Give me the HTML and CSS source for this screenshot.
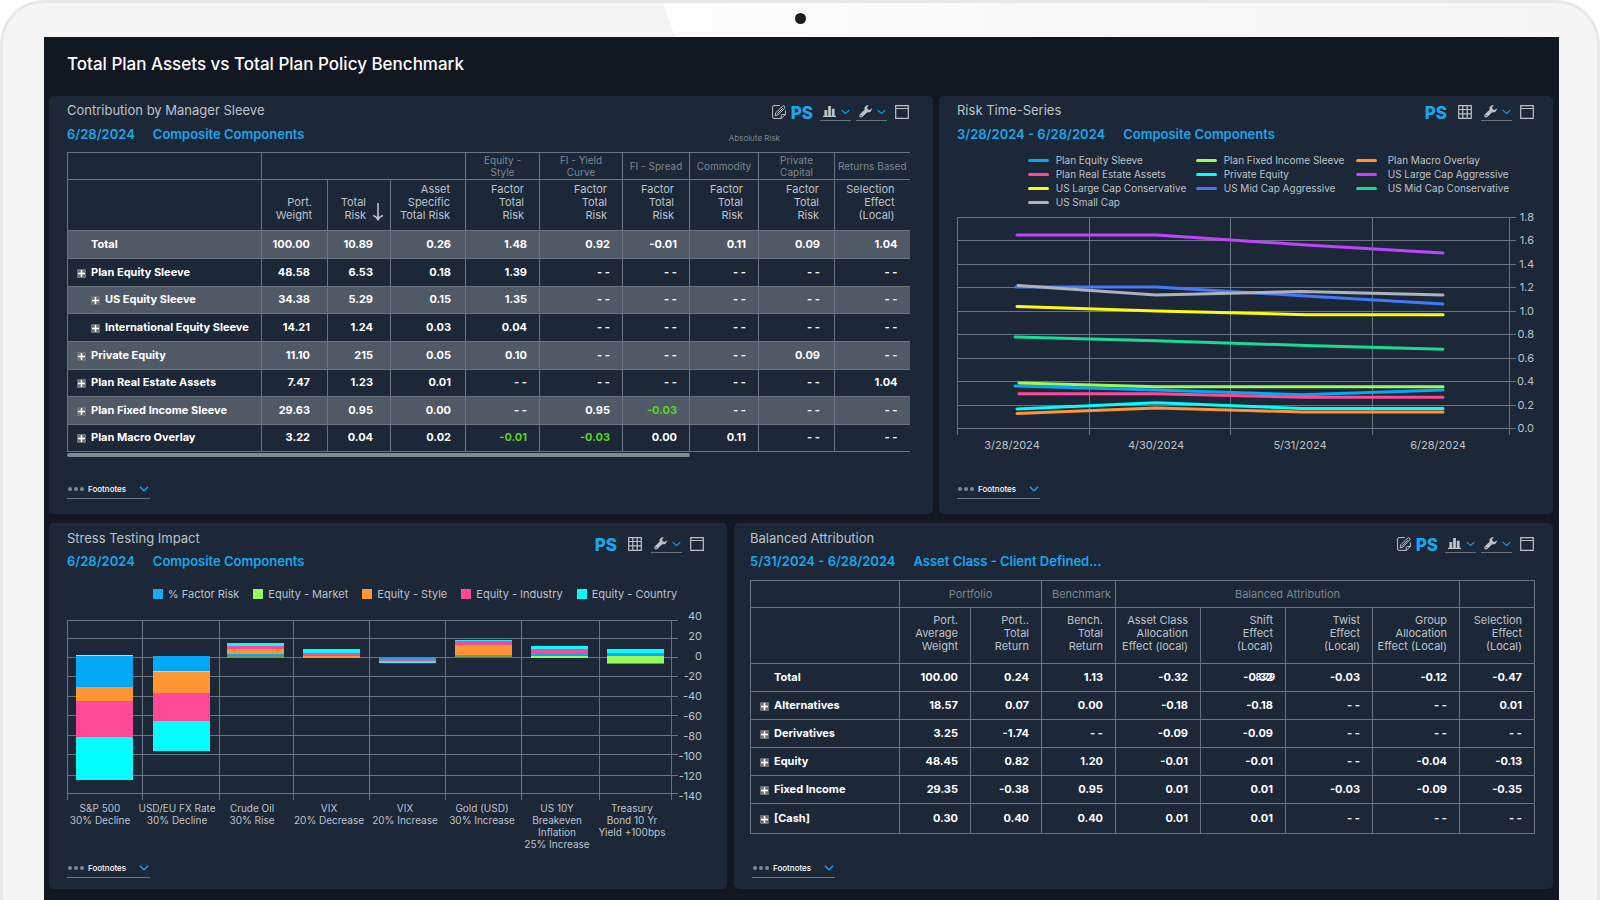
FILE: index.html
```html
<!DOCTYPE html>
<html lang="en">
<head>
<meta charset="utf-8">
<title>Total Plan Assets vs Total Plan Policy Benchmark</title>
<link rel="stylesheet" href="styles.css">
</head>
<body>
<svg class="symbols" aria-hidden="true">
  <symbol id="i-edit" viewBox="0 0 14 14"><path d="M8 .6H2Q.6.600.6 2V12Q.6 13.400 2 13.400H9.200L13.400 9.500V5.500M9.200 13.400V10.500Q9.200 9.500 10.200 9.500H13.400" /><path d="M3 10.800L3.800 7.800L10.600 1Q11.400.3 12.400 1.200Q13.400 2.200 12.700 3.100L5.900 10ZM5.200 8.800L11 3"/></symbol>
  <symbol id="i-bars" viewBox="0 0 14 14"><path class="solid" d="M1.500 5.500H4.500V11.500H5.500V1H8.500V11.500H9.500V4H12.500V11.500H14V13H0V11.500H1.500Z"/></symbol>
  <symbol id="i-wrench" viewBox="0 0 14 14"><path class="solid" d="M13.600 3.400L11.500 5.400L9.300 4.700L8.700 2.500L10.600.400Q8.500-.2 6.900 1.300Q5.500 2.900 6.100 4.900L.8 10.300Q-.2 11.600.8 12.900Q2.200 14.100 3.500 13L8.900 7.700Q11 8.300 12.600 6.900Q14.100 5.300 13.600 3.400ZM2.100 12.200A.7.7 0 1 1 2.100 10.800A.7.7 0 1 1 2.100 12.200Z" fill-rule="evenodd"/></symbol>
  <symbol id="i-window" viewBox="0 0 14 14"><path d="M.7.700H13.300V13.300H.7ZM.7 3.500H13.300"/></symbol>
  <symbol id="i-grid" viewBox="0 0 14 14"><path d="M.7.700H13.300V13.300H.7ZM.7 4.500H13.300M.7 8.800H13.300M4.800.7V13.300M9.200.7V13.300"/></symbol>
  <symbol id="i-chevron" viewBox="0 0 10 6"><path d="M.8.800L5 4.800L9.200.8"/></symbol>
  <symbol id="i-plus" viewBox="0 0 9 9"><rect class="tile" width="9" height="9" rx="1"/><path d="M4.500 1V8M1 4.500H8"/></symbol>
  <symbol id="i-dots" viewBox="0 0 16 4"><circle cx="2" cy="2" r="2"/><circle cx="8" cy="2" r="2"/><circle cx="14" cy="2" r="2"/></symbol>
</svg>
<div class="device">
  <div class="glare"></div>
  <div class="camera"></div>
  <main class="screen">
    <h1>Total Plan Assets vs Total Plan Policy Benchmark</h1>

    <div class="row row-top">
      <section class="panel">
        <header class="panel-head">
          <div>
            <h2>Contribution by Manager Sleeve</h2>
            <p class="sub"><span>6/28/2024</span><span>Composite Components</span></p>
          </div>
          <div class="tools">
            <button aria-label="Edit"><svg class="ic thin"><use href="#i-edit"/></svg></button>
            <button class="ps">PS</button>
            <button class="drop" aria-label="Chart type"><svg class="ic"><use href="#i-bars"/></svg><svg class="chev"><use href="#i-chevron"/></svg></button>
            <button class="drop" aria-label="Settings"><svg class="ic"><use href="#i-wrench"/></svg><svg class="chev"><use href="#i-chevron"/></svg></button>
            <button class="win" aria-label="Maximize"><svg class="ic"><use href="#i-window"/></svg></button>
          </div>
        </header>
        <p class="caption">Absolute Risk</p>
        <table class="contrib">
          <colgroup><col class="w194"><col class="w66"><col class="w63"><col class="w75"><col class="w74"><col class="w83"><col class="w67"><col class="w69"><col class="w76"><col class="w75"></colgroup>
          <thead>
            <tr class="groups"><th></th><th colspan="3"></th><th>Equity -<br>Style</th><th>FI - Yield<br>Curve</th><th>FI - Spread</th><th>Commodity</th><th>Private<br>Capital</th><th>Returns Based</th></tr>
            <tr class="heads"><th></th><th>Port.<br>Weight</th><th class="sorted"><span>Total<br>Risk</span><svg class="sort" viewBox="0 0 12 20"><path d="M6 1V18M1 13.500Q5.500 15 6 18.500Q6.500 15 11 13.500"/></svg></th><th>Asset<br>Specific<br>Total Risk</th><th>Factor<br>Total<br>Risk</th><th>Factor<br>Total<br>Risk</th><th>Factor<br>Total<br>Risk</th><th>Factor<br>Total<br>Risk</th><th>Factor<br>Total<br>Risk</th><th>Selection<br>Effect<br>(Local)</th></tr>
          </thead>
          <tbody>
            <tr><th class="plain">Total</th><td>100.00</td><td>10.89</td><td>0.26</td><td>1.48</td><td>0.92</td><td>-0.01</td><td>0.11</td><td>0.09</td><td>1.04</td></tr>
            <tr><th><button aria-label="Expand"><svg class="plus"><use href="#i-plus"/></svg></button>Plan Equity Sleeve</th><td>48.58</td><td>6.53</td><td>0.18</td><td>1.39</td><td>- -</td><td>- -</td><td>- -</td><td>- -</td><td>- -</td></tr>
            <tr><th class="child"><button aria-label="Expand"><svg class="plus"><use href="#i-plus"/></svg></button>US Equity Sleeve</th><td>34.38</td><td>5.29</td><td>0.15</td><td>1.35</td><td>- -</td><td>- -</td><td>- -</td><td>- -</td><td>- -</td></tr>
            <tr><th class="child"><button aria-label="Expand"><svg class="plus"><use href="#i-plus"/></svg></button>International Equity Sleeve</th><td>14.21</td><td>1.24</td><td>0.03</td><td>0.04</td><td>- -</td><td>- -</td><td>- -</td><td>- -</td><td>- -</td></tr>
            <tr><th><button aria-label="Expand"><svg class="plus"><use href="#i-plus"/></svg></button>Private Equity</th><td>11.10</td><td>215</td><td>0.05</td><td>0.10</td><td>- -</td><td>- -</td><td>- -</td><td>0.09</td><td>- -</td></tr>
            <tr><th><button aria-label="Expand"><svg class="plus"><use href="#i-plus"/></svg></button>Plan Real Estate Assets</th><td>7.47</td><td>1.23</td><td>0.01</td><td>- -</td><td>- -</td><td>- -</td><td>- -</td><td>- -</td><td>1.04</td></tr>
            <tr><th><button aria-label="Expand"><svg class="plus"><use href="#i-plus"/></svg></button>Plan Fixed Income Sleeve</th><td>29.63</td><td>0.95</td><td>0.00</td><td>- -</td><td>0.95</td><td class="green">-0.03</td><td>- -</td><td>- -</td><td>- -</td></tr>
            <tr><th><button aria-label="Expand"><svg class="plus"><use href="#i-plus"/></svg></button>Plan Macro Overlay</th><td>3.22</td><td>0.04</td><td>0.02</td><td class="green">-0.01</td><td class="green">-0.03</td><td>0.00</td><td>0.11</td><td>- -</td><td>- -</td></tr>
          </tbody>
        </table>
        <div class="scroll"></div>
        <button class="foot"><svg class="dots"><use href="#i-dots"/></svg>Footnotes<svg class="chev"><use href="#i-chevron"/></svg></button>
      </section>

      <section class="panel right">
        <header class="panel-head">
          <div>
            <h2>Risk Time-Series</h2>
            <p class="sub"><span>3/28/2024 - 6/28/2024</span><span>Composite Components</span></p>
          </div>
          <div class="tools wide">
            <button class="ps">PS</button>
            <button aria-label="Table"><svg class="ic"><use href="#i-grid"/></svg></button>
            <button class="drop" aria-label="Settings"><svg class="ic"><use href="#i-wrench"/></svg><svg class="chev"><use href="#i-chevron"/></svg></button>
            <button class="win" aria-label="Maximize"><svg class="ic"><use href="#i-window"/></svg></button>
          </div>
        </header>
        <ul class="line-legend">
          <li><i class="k-blue"></i>Plan Equity Sleeve</li><li><i class="k-lime"></i>Plan Fixed Income Sleeve</li><li><i class="k-orange"></i>Plan Macro Overlay</li>
          <li><i class="k-pink"></i>Plan Real Estate Assets</li><li><i class="k-cyan"></i>Private Equity</li><li><i class="k-purple"></i>US Large Cap Aggressive</li>
          <li><i class="k-yellow"></i>US Large Cap Conservative</li><li><i class="k-royal"></i>US Mid Cap Aggressive</li><li><i class="k-green"></i>US Mid Cap Conservative</li>
          <li><i class="k-grey"></i>US Small Cap</li>
        </ul>
        <svg class="chart" viewBox="957 209 577 246" role="img" aria-label="Risk time-series chart">
          <path class="gridline" d="M957 217.500H1516M957 240.500H1516M957 264.500H1516M957 287.500H1516M957 311.500H1516M957 334.500H1516M957 358.500H1516M957 381.500H1516M957 405.500H1516M957 428.500H1516M957.500 217V435M1089.500 217V435M1230.500 217V435M1372.500 217V435M1509.500 217V435"/>
          <g class="series">
            <path class="s-purple" d="M1017 235H1156L1306 245L1443 253"/>
            <path class="s-royal" d="M1016 287H1156L1306 296L1443 304"/>
            <path class="s-grey" d="M1018 285.500L1156 295L1302 291.500L1443 295"/>
            <path class="s-yellow" d="M1017 306.500L1156 311L1306 314.700H1443"/>
            <path class="s-green" d="M1015 337L1156 340.800L1306 345.500L1443 349.300"/>
            <path class="s-blue" d="M1015 386L1156 390L1302 394.700L1443 390"/>
            <path class="s-lime" d="M1019 383L1156 386.800H1443"/>
            <path class="s-pink" d="M1019 393.700H1156L1302 397.300H1443"/>
            <path class="s-orange" d="M1017 413.500L1156 408L1302 412H1443"/>
            <path class="s-cyan" d="M1017 409L1156 402.700L1302 408.500H1443"/>
          </g>
          <g class="t11 end">
            <text x="1534" y="221">1.8</text><text x="1534" y="244">1.6</text><text x="1534" y="268">1.4</text><text x="1534" y="291">1.2</text><text x="1534" y="315">1.0</text><text x="1534" y="338">0.8</text><text x="1534" y="362">0.6</text><text x="1534" y="385">0.4</text><text x="1534" y="409">0.2</text><text x="1534" y="432">0.0</text>
          </g>
          <g class="t11 mid"><text x="1012" y="449">3/28/2024</text><text x="1156" y="449">4/30/2024</text><text x="1300" y="449">5/31/2024</text><text x="1438" y="449">6/28/2024</text></g>
        </svg>
        <button class="foot"><svg class="dots"><use href="#i-dots"/></svg>Footnotes<svg class="chev"><use href="#i-chevron"/></svg></button>
      </section>
    </div>

    <div class="row row-bottom">
      <section class="panel stress">
        <header class="panel-head">
          <div>
            <h2>Stress Testing Impact</h2>
            <p class="sub"><span>6/28/2024</span><span>Composite Components</span></p>
          </div>
          <div class="tools wide">
            <button class="ps">PS</button>
            <button aria-label="Table"><svg class="ic"><use href="#i-grid"/></svg></button>
            <button class="drop" aria-label="Settings"><svg class="ic"><use href="#i-wrench"/></svg><svg class="chev"><use href="#i-chevron"/></svg></button>
            <button class="win" aria-label="Maximize"><svg class="ic"><use href="#i-window"/></svg></button>
          </div>
        </header>
        <ul class="bar-legend"><li><i class="k-sky"></i>% Factor Risk</li><li><i class="k-lime"></i>Equity - Market</li><li><i class="k-orange"></i>Equity - Style</li><li><i class="k-pink"></i>Equity - Industry</li><li><i class="k-cyan"></i>Equity - Country</li></ul>
        <svg class="chart" viewBox="67 602 637 250" role="img" aria-label="Stress testing impact chart">
          <path class="gridline" d="M67 620.500H678M67 638.500H678M67 657.500H678M67 676.500H678M67 696.500H678M67 715.500H678M67 735.500H678M67 754.500H678M67 775.500H678M67 793.500H678M67.500 620V800M142.500 620V800M219.500 620V800M293.500 620V800M369.500 620V800M445.500 620V800M521.500 620V800M599.500 620V800M671.500 620V800"/>
          <g class="b-blue"><path d="M76 656h57v31h-57zM153 656h57v15h-57zM227 654h57v2h-57zM303 655h57v1h-57zM379 657h57v2h-57zM531 654h57v2h-57zM607 654h57v2h-57z"/></g>
          <g class="b-lime"><path d="M76 655h57v1h-57zM153 671h57v1h-57zM531 656h57v2h-57zM607 656h57v7h-57z"/></g>
          <g class="b-moss"><path d="M227 656h57v2h-57zM455 655h57v2h-57z"/></g>
          <g class="b-orange"><path d="M76 687h57v14h-57zM153 672h57v21h-57zM227 649h57v5h-57zM303 656h57v2h-57zM455 645h57v10h-57z"/></g>
          <g class="b-pink"><path d="M76 701h57v36h-57zM153 693h57v28h-57zM227 646h57v3h-57zM303 653h57v2h-57zM379 659h57v2h-57zM455 641h57v4h-57zM531 649h57v5h-57zM607 663h57v1h-57z"/></g>
          <g class="b-mauve"><path d="M607 653h57v1h-57z"/></g>
          <g class="b-cyan"><path d="M76 737h57v43h-57zM153 721h57v30h-57zM227 643h57v3h-57zM303 649h57v4h-57zM379 661h57v2h-57zM455 640h57v1h-57zM531 646h57v3h-57zM607 649h57v4h-57z"/></g>
          <g class="t11 end"><text x="702" y="620">40</text><text x="702" y="640">20</text><text x="702" y="660">0</text><text x="702" y="680">-20</text><text x="702" y="700">-40</text><text x="702" y="720">-60</text><text x="702" y="740">-80</text><text x="702" y="760">-100</text><text x="702" y="780">-120</text><text x="702" y="800">-140</text></g>
          <g class="t10 mid">
            <text x="100" y="812">S&amp;P 500</text><text x="100" y="824">30% Decline</text>
            <text x="177" y="812">USD/EU FX Rate</text><text x="177" y="824">30% Decline</text>
            <text x="252" y="812">Crude Oil</text><text x="252" y="824">30% Rise</text>
            <text x="329" y="812">VIX</text><text x="329" y="824">20% Decrease</text>
            <text x="405" y="812">VIX</text><text x="405" y="824">20% Increase</text>
            <text x="482" y="812">Gold (USD)</text><text x="482" y="824">30% Increase</text>
            <text x="557" y="812">US 10Y</text><text x="557" y="824">Breakeven</text><text x="557" y="836">Inflation</text><text x="557" y="848">25% Increase</text>
            <text x="632" y="812">Treasury</text><text x="632" y="824">Bond 10 Yr</text><text x="632" y="836">Yield +100bps</text>
          </g>
        </svg>
        <button class="foot"><svg class="dots"><use href="#i-dots"/></svg>Footnotes<svg class="chev"><use href="#i-chevron"/></svg></button>
      </section>

      <section class="panel right balanced">
        <header class="panel-head">
          <div>
            <h2>Balanced Attribution</h2>
            <p class="sub"><span>5/31/2024 - 6/28/2024</span><span>Asset Class - Client Defined...</span></p>
          </div>
          <div class="tools">
            <button aria-label="Edit"><svg class="ic thin"><use href="#i-edit"/></svg></button>
            <button class="ps">PS</button>
            <button class="drop" aria-label="Chart type"><svg class="ic"><use href="#i-bars"/></svg><svg class="chev"><use href="#i-chevron"/></svg></button>
            <button class="drop" aria-label="Settings"><svg class="ic"><use href="#i-wrench"/></svg><svg class="chev"><use href="#i-chevron"/></svg></button>
            <button class="win" aria-label="Maximize"><svg class="ic"><use href="#i-window"/></svg></button>
          </div>
        </header>
        <table class="attrib">
          <colgroup><col class="w149"><col class="w71"><col class="w71"><col class="w74"><col class="w85"><col class="w85"><col class="w87"><col class="w87"><col class="w75"></colgroup>
          <thead>
            <tr class="groups"><th></th><th colspan="2">Portfolio</th><th class="tight">Benchmark</th><th colspan="4">Balanced Attribution</th><th></th></tr>
            <tr class="heads"><th></th><th>Port.<br>Average<br>Weight</th><th>Port..<br>Total<br>Return</th><th>Bench.<br>Total<br>Return</th><th>Asset Class<br>Allocation<br>Effect (local)</th><th>Shift<br>Effect<br>(Local)</th><th>Twist<br>Effect<br>(Local)</th><th>Group<br>Allocation<br>Effect (Local)</th><th>Selection<br>Effect<br>(Local)</th></tr>
          </thead>
          <tbody>
            <tr><th class="plain">Total</th><td>100.00</td><td>0.24</td><td>1.13</td><td>-0.32</td><td class="stacked">-0.32<span>8.79</span></td><td>-0.03</td><td>-0.12</td><td>-0.47</td></tr>
            <tr><th><button aria-label="Expand"><svg class="plus"><use href="#i-plus"/></svg></button>Alternatives</th><td>18.57</td><td>0.07</td><td>0.00</td><td>-0.18</td><td>-0.18</td><td>- -</td><td>- -</td><td>0.01</td></tr>
            <tr><th><button aria-label="Expand"><svg class="plus"><use href="#i-plus"/></svg></button>Derivatives</th><td>3.25</td><td>-1.74</td><td>- -</td><td>-0.09</td><td>-0.09</td><td>- -</td><td>- -</td><td>- -</td></tr>
            <tr><th><button aria-label="Expand"><svg class="plus"><use href="#i-plus"/></svg></button>Equity</th><td>48.45</td><td>0.82</td><td>1.20</td><td>-0.01</td><td>-0.01</td><td>- -</td><td>-0.04</td><td>-0.13</td></tr>
            <tr><th><button aria-label="Expand"><svg class="plus"><use href="#i-plus"/></svg></button>Fixed Income</th><td>29.35</td><td>-0.38</td><td>0.95</td><td>0.01</td><td>0.01</td><td>-0.03</td><td>-0.09</td><td>-0.35</td></tr>
            <tr><th><button aria-label="Expand"><svg class="plus"><use href="#i-plus"/></svg></button>[Cash]</th><td>0.30</td><td>0.40</td><td>0.40</td><td>0.01</td><td>0.01</td><td>- -</td><td>- -</td><td>- -</td></tr>
          </tbody>
        </table>
        <button class="foot"><svg class="dots"><use href="#i-dots"/></svg>Footnotes<svg class="chev"><use href="#i-chevron"/></svg></button>
      </section>
    </div>
  </main>
</div>
</body>
</html>
```
FILE: styles.css
```css
* { box-sizing: border-box; }
html { background: #fff; }
body { margin: 0; height: 100vh; overflow: hidden; font-family: Inter, "Liberation Sans", sans-serif; font-size: 11px; color: #bcc3c8; }
h1, h2, p, ul { margin: 0; padding: 0; font-weight: 400; }
ul { list-style: none; }
button { display: block; margin: 0; padding: 0; border: 0; background: none; color: inherit; font: inherit; cursor: pointer; }
svg { display: block; }
.symbols { position: absolute; width: 0; height: 0; }

.device { position: relative; min-height: 100vh; padding: 34px 38px 0 41px; border: 3px solid #e8e8e8; border-bottom: 0; border-radius: 44px 44px 0 0; background: #f4f4f4; }
.glare { position: absolute; top: 0; left: 660px; right: 41px; height: 34px; background: linear-gradient(90deg, #fdfdfd, #f4f4f4); clip-path: polygon(0 0, 100% 0, 100% 100%, 12px 100%); }
.camera { position: absolute; top: 10px; left: 50%; width: 11px; height: 11px; margin-left: -5px; border-radius: 50%; background: #1d1d1d; }
.screen { position: relative; padding: 0 6px 11px 5px; background: #121822; }
h1 { padding: 16px 0 20px 18px; font-size: 17px; line-height: 23px; font-weight: 500; color: #fff; }
.row { display: grid; }
.row-top { grid-template-columns: 884fr 614fr; gap: 6px; margin-bottom: 9px; }
.row-bottom { grid-template-columns: 678fr 819fr; gap: 7px; }
.panel { display: flex; flex-direction: column; min-width: 0; padding: 4px 24px 15px 18px; border-radius: 5px; background: #1c2738; }
.panel.right { padding-right: 19px; }
.panel.stress { padding-right: 23px; }
.row-top .panel { min-height: 418px; }
.row-bottom .panel { min-height: 366px; padding-top: 5px; padding-bottom: 11px; }
.panel.balanced { padding-left: 16px; }

.panel-head { display: flex; justify-content: space-between; }
h2 { font-size: 13px; line-height: 20px; color: #bcc3c8; }
.sub { display: flex; gap: 18px; padding-top: 5px; font-size: 13px; line-height: 18px; font-weight: 600; color: #18a8ee; }
.row-bottom .sub { padding-top: 4px; }
.tools { display: flex; align-items: flex-start; gap: 5px; padding-top: 5px; height: 22px; }
.row-bottom .tools { padding-top: 9px; }
.tools.wide { gap: 9px; }
.tools .ps + button { margin-left: 2px; }
.win { margin-left: 3px; }
.wide .win { margin-left: -1px; }
.ic { width: 14px; height: 14px; fill: none; stroke: #bcc3c8; stroke-width: 1.2; }
.thin { stroke-width: 1; }
.ic .solid, .solid { fill: #bcc3c8; stroke: none; }
.ps { font-size: 17px; line-height: 17px; font-weight: 800; color: #18a8ee; }
.drop { display: flex; align-items: center; justify-content: space-between; width: 31px; height: 16px; padding: 0 1px 2px 3px; border-bottom: 1px solid #66717b; }
.drop .ic { width: 13px; height: 13px; }
.drop .chev { width: 9px; }
.chev { width: 10px; height: 6px; fill: none; stroke: #18a8ee; stroke-width: 1.2; }
.caption { margin-top: -10px; padding-right: 129px; font-size: 8px; line-height: 10px; text-align: right; color: #7d878d; }

table { width: 100%; border-collapse: collapse; table-layout: fixed; }
.w194 { width: 194px; } .w149 { width: 149px; } .w87 { width: 87px; } .w85 { width: 85px; } .w83 { width: 83px; } .w76 { width: 76px; } .w75 { width: 75px; } .w74 { width: 74px; } .w71 { width: 71px; } .w69 { width: 69px; } .w67 { width: 67px; } .w66 { width: 66px; } .w63 { width: 63px; }
th, td { padding: 0; border: 1px solid #6a7480; font-weight: 400; white-space: nowrap; }
.contrib { margin-top: 9px; }
.contrib th:last-child, .contrib td:last-child { border-right: 0; }
.groups th { height: 27px; font-size: 10px; line-height: 12px; color: #7d878d; text-align: center; }
.heads th { height: 51px; padding: 3px 15px 8px 0; vertical-align: bottom; text-align: right; font-size: 11px; line-height: 13px; color: #bcc3c8; }
.sorted { position: relative; }
.contrib .heads .sorted { padding-right: 24px; }
.sort { position: absolute; right: 6px; bottom: 8px; width: 12px; height: 20px; fill: none; stroke: #bcc3c8; stroke-width: 1.600; }
tbody th, tbody td { height: 28px; padding-bottom: 2px; font-size: 11px; line-height: 14px; font-weight: 700; color: #fff; text-align: right; }
tbody td { padding-right: 12px; }
.contrib tbody tr:nth-child(odd) { background: #505a66; }
.contrib tbody tr:nth-child(3n) > *, .contrib tbody tr:last-child > * { height: 27px; }
.contrib td:nth-child(2), .contrib td:nth-child(3) { padding-right: 17px; }
.contrib td:nth-child(4), .contrib td:nth-child(9) { padding-right: 14px; }
.contrib td.green { color: #5ad61f; }
tbody th { padding-left: 9px; text-align: left; }
tbody th.plain { padding-left: 23px; }
tbody th.child { padding-left: 23px; }
th button { display: inline-block; margin-right: 5px; vertical-align: -2px; }
.plus { width: 9px; height: 9px; fill: none; stroke: #fff; stroke-width: 1.500; }
.tile { fill: #6f7275; stroke: none; }
.scroll { width: 74%; height: 4px; margin-top: 1px; border-radius: 2px; background: #7f8b92; }

.attrib { margin-top: 10px; }
.attrib .groups th { font-size: 11px; }
.attrib .groups .tight { text-align: right; padding-right: 4px; }
.attrib .heads th { height: 55px; padding: 6px 12px 10px 0; }
.attrib tbody tr:last-child > * { height: 30px; }
.stacked { position: relative; }
.stacked span { position: absolute; right: 10px; top: 6px; font-size: 9px; }

.foot { display: flex; align-items: center; align-self: flex-start; width: 83px; height: 19px; margin-top: auto; padding: 0 1px; border-bottom: 1px solid #6c7780; font-size: 8px; font-weight: 500; color: #fff; }
.balanced .foot { margin-left: 2px; }
.foot .chev { margin-left: auto; }
.dots { width: 16px; height: 4px; margin-right: 4px; fill: #7f8b92; }

.line-legend { display: grid; grid-template-columns: 168px 160px auto; justify-content: end; margin: 10px 25px 0 0; font-size: 10px; line-height: 14px; }
.line-legend li { display: flex; align-items: center; white-space: nowrap; }
.line-legend i { width: 21px; height: 3px; margin-right: 7px; border-radius: 2px; }
.line-legend li:nth-child(3n) i { margin-right: 11px; }
.bar-legend { display: flex; justify-content: center; gap: 14px; margin-top: 16px; padding-left: 59px; line-height: 16px; }
.bar-legend li { display: flex; align-items: center; white-space: nowrap; }
.bar-legend i { width: 10px; height: 10px; margin-right: 5px; }
.k-blue { background: #03a9f4; } .k-sky { background: #1caaee; } .k-lime { background: #97fb5c; } .k-orange { background: #ff9633; } .k-pink { background: #ff4896; } .k-cyan { background: #0ff; } .k-purple { background: #c044ff; } .k-yellow { background: #fffb10; } .k-royal { background: #4379ff; } .k-green { background: #14dc94; } .k-grey { background: #adb2bd; }

.chart { width: 100%; height: auto; }
.gridline { fill: none; stroke: #6a7480; stroke-width: 1; }
.series { fill: none; stroke-width: 3; stroke-linecap: round; stroke-linejoin: round; }
.s-purple { stroke: #c044ff; } .s-royal { stroke: #4379ff; } .s-grey { stroke: #adb2bd; } .s-yellow { stroke: #fffb10; } .s-green { stroke: #14dc94; } .s-blue { stroke: #03a9f4; } .s-lime { stroke: #97fb5c; } .s-pink { stroke: #ff4896; } .s-orange { stroke: #ff9633; } .s-cyan { stroke: #0ff; }
.b-blue { fill: #03a9f4; } .b-lime { fill: #97fb5c; } .b-moss { fill: #6f9a55; } .b-orange { fill: #ff9633; } .b-pink { fill: #ff4896; } .b-mauve { fill: #8a6f8c; } .b-cyan { fill: #0ff; }
.t11, .t10 { fill: #bcc3c8; font-size: 11px; }
.t10 { font-size: 10px; }
.end { text-anchor: end; }
.mid { text-anchor: middle; }
```
